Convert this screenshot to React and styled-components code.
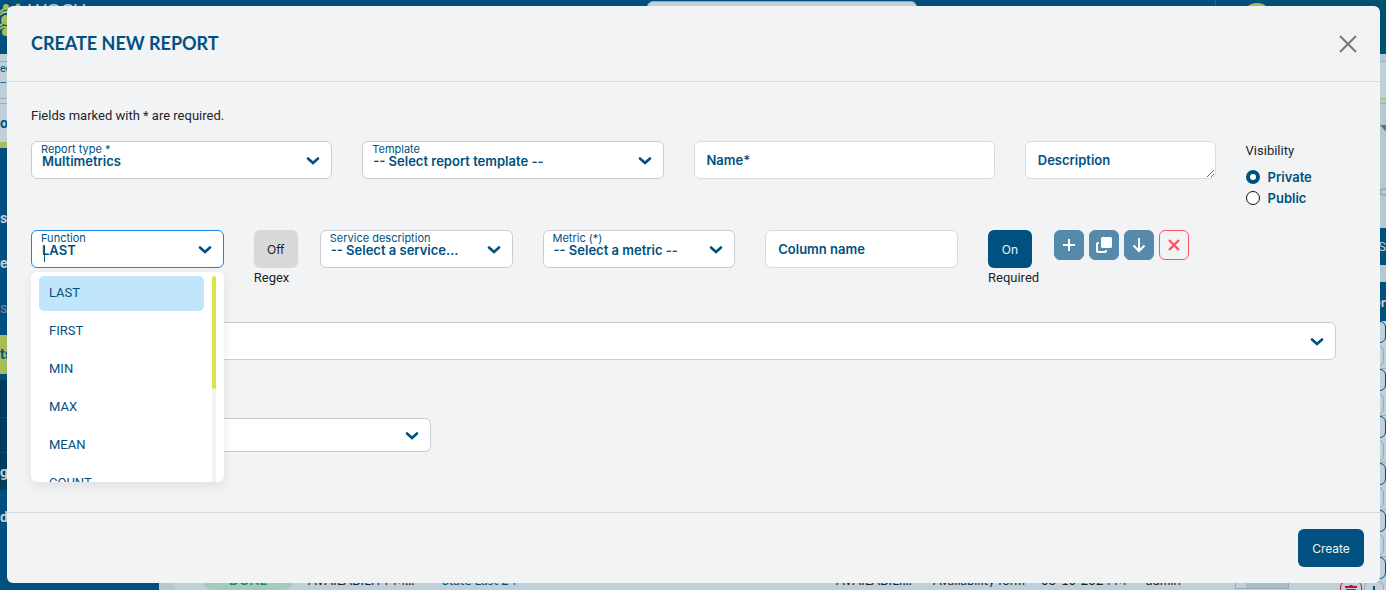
import React, { useState } from 'react';
import styled, { createGlobalStyle, css } from 'styled-components';

const colors = {
  navy: '#00507f',
  navyDark: '#003d5c',
  blue: '#005180',
  lime: '#dde346',
  olive: '#a8bc58',
  panel: '#f2f3f5',
  border: '#cacccf',
  mist: '#bfd0da',
};

const fonts = {
  title: "Lato, 'Noto Sans', sans-serif",
  body: "Roboto, 'Noto Sans', sans-serif",
  control: "Inter, 'Noto Sans', sans-serif",
};

const GlobalStyle = createGlobalStyle`
  *, *::before, *::after { box-sizing: border-box; }
  body { margin: 0; overflow: hidden; background: ${colors.navy}; }
  button, input, select, textarea { font-family: inherit; margin: 0; }
`;

/* ---------- page behind the dialog ---------- */

const Page = styled.div`
  position: relative;
  height: 100vh;
  overflow: hidden;
  display: flex;
  flex-direction: column;
  font-family: ${fonts.body};
  font-size: 13px;
  color: #212529;
`;

const Topbar = styled.header`
  flex: none;
  display: flex;
  align-items: flex-start;
  height: 54px;
  background: linear-gradient(90deg, #00507f 85%, #005070);
`;

const Brand = styled.div`
  display: flex;
  align-items: flex-start;
  gap: 4px;
  width: 647px;
  color: #bfd0da;
  font-family: ${fonts.title};
  font-size: 18px;
  line-height: 20px;

  svg { flex: none; }
`;

const SearchBox = styled.div`
  width: 270px;
  height: 36px;
  margin-top: 1px;
  border: 1px solid #8fa9ba;
  border-radius: 6px;
  background: #c3d0dc;
`;

const UserArea = styled.div`
  flex: 1;
  display: flex;
  justify-content: flex-end;
  gap: 26px;
  padding-right: 114px;
`;

const Divider = styled.div`
  width: 1px;
  height: 54px;
  background: #33627a;
`;

const Avatar = styled.div`
  width: 30px;
  height: 30px;
  margin-top: 3px;
  border-radius: 50%;
  background: ${colors.olive};
`;

const PageBody = styled.div`
  flex: 1;
  display: flex;
  min-height: 0;
`;

const Side = styled.aside`
  flex: none;
  width: 159px;
  background: ${colors.navy};
`;

const SideFilter = styled.div`
  height: 88px;
  background: ${colors.mist};
  color: ${colors.blue};
  line-height: 14px;
  font-size: 11px;
  padding-top: 7px;
`;

const SideSelect = styled.div`
  height: 38px;
  border-top: 1px solid #9aacb8;
  border-bottom: 1px solid #9aacb8;
`;

const SideTab = styled.div`
  margin-top: 4px;
  height: 39px;
  border-top: 1px solid #9aacb8;
  font-size: 14px;
  font-weight: 700;
  line-height: 39px;
`;

const SideStripe = styled.div`
  height: 6px;
  background: ${colors.olive};
`;

const SideItem = styled.div`
  height: ${({ $height }) => $height}px;
  line-height: ${({ $height }) => $height}px;
  font-size: 14px;
  font-weight: 700;
  color: #c0ced8;
  white-space: nowrap;
  ${({ $tone }) => $tone === 'dim' && css`
    font-weight: 400;
    color: #80868f;
  `}
  ${({ $tone }) => $tone === 'active' && css`
    background: ${colors.olive};
    color: ${colors.blue};
  `}
  ${({ $tone }) => $tone === 'dark' && css`
    background: ${colors.navyDark};
    border-bottom: 1px solid #0a4a6e;
  `}
`;

const Content = styled.main`
  flex: 1;
  min-width: 0;
  background: #b5c7d1;
`;

const ContentFilter = styled.div`
  height: 38px;
  margin-top: 7px;
  border-top: 1px solid ${colors.olive};
  border-bottom: 1px solid ${colors.olive};
  background: ${colors.mist};
`;

const ContentTools = styled.div`
  display: flex;
  justify-content: flex-end;
  height: 125px;
  margin-top: 4px;
  padding-top: 21px;
  border-top: 1px solid #9aacb8;
`;

const Band = styled.div`
  height: 37px;
  margin-bottom: 17px;
  background: ${colors.navy};
  color: ${colors.mist};
  text-align: right;
  line-height: 37px;
`;

const ReportTable = styled.table`
  width: calc(100% - 15px);
  margin-left: 15px;
  border-collapse: collapse;
  table-layout: fixed;
  font-family: ${fonts.title};
  font-size: 13px;
  background: ${colors.mist};

  th {
    height: 39px;
    padding: 0;
    background: ${colors.navy};
    color: ${colors.mist};
    text-align: right;
    font-size: 14px;
  }

  td {
    height: 47px;
    padding: 0;
    border-bottom: 1px solid #9fb2bd;
    color: #15252f;
    white-space: nowrap;
  }
`;

const DoneBadge = styled.span`
  display: block;
  width: 90px;
  margin-left: 29px;
  border-radius: 10px;
  background: #a3cabb;
  color: #0b9444;
  text-align: center;
  font-weight: 700;
  line-height: 20px;
`;

const LinkCell = styled.span`
  color: ${colors.blue};
`;

const Gauge = styled.div`
  width: 54px;
  height: 18px;
  border: 1px solid #97abb8;
  background: linear-gradient(90deg, ${colors.mist} 20%, #a9bdc9 20%);
`;

const RowActions = styled.div`
  display: grid;
  gap: 2px;
  height: 46px;
`;

const ActionLine = styled.div`
  display: flex;
  justify-content: flex-end;
  gap: 2px;
  padding-right: ${({ $inset }) => ($inset ? 2 : 0)}px;
`;

const ActionBox = styled.span`
  display: flex;
  justify-content: center;
  width: ${({ $narrow }) => ($narrow ? 20 : 22)}px;
  height: 22px;
  padding-top: 2px;
  border: 1px solid ${({ $color }) => $color};
  border-radius: 6px;
  color: ${({ $color }) => $color};
`;

/* ---------- dialog ---------- */

const Dialog = styled.section`
  position: absolute;
  top: 6px;
  left: 7px;
  right: 6px;
  border-radius: 6px;
  background: ${colors.panel};
`;

const DialogHeader = styled.header`
  display: flex;
  align-items: center;
  justify-content: space-between;
  height: 76px;
  padding: 0 20px 0 24px;
  border-bottom: 1px solid #d6d8da;
`;

const DialogTitle = styled.h2`
  margin: 0 0 2px;
  color: ${colors.blue};
  font-family: ${fonts.title};
  font-size: 18px;
  line-height: 24px;
  font-weight: 700;
`;

const CloseButton = styled.button`
  display: flex;
  padding: 0;
  border: 0;
  background: none;
  color: #777;
  cursor: pointer;
`;

const DialogBody = styled.form`
  padding: 24px 24px 60px;
`;

const Note = styled.p`
  margin: 0 0 15px;
  line-height: 20px;
`;

const MainFields = styled.div`
  display: grid;
  grid-template-columns: repeat(12, minmax(0, 1fr));
  margin-bottom: 22px;
`;

const MetricFields = styled.div`
  display: grid;
  grid-template-columns: minmax(0, 1fr) 66px repeat(3, minmax(0, 1fr)) 66px 302px;
  margin-bottom: 34px;
`;

const Cell = styled.div`
  grid-column: span ${({ $span = 1 }) => $span};
  padding-right: ${({ $flush }) => ($flush ? 0 : 30)}px;
`;

const FieldBox = styled.div`
  position: relative;
  height: ${({ $short }) => ($short ? 34 : 38)}px;
  width: ${({ $width = '100%' }) => $width};
  margin-bottom: ${({ $spaced }) => ($spaced ? 58 : 0)}px;
`;

const FloatingLabel = styled.label`
  position: absolute;
  top: 2px;
  left: 10px;
  color: ${colors.blue};
  font-family: ${fonts.control};
  font-size: 11px;
  line-height: 13px;
  pointer-events: none;
`;

const Chevron = styled.svg`
  position: absolute;
  top: 50%;
  right: 12px;
  width: 14px;
  height: 8px;
  margin-top: -3px;
  pointer-events: none;
`;

const control = css`
  display: block;
  width: 100%;
  border: 1px solid ${colors.border};
  border-radius: 6px;
  background: #fff;
  color: ${colors.blue};
  font-family: ${fonts.control};
  font-size: 13px;
  font-weight: 600;
  line-height: 20px;
  outline: 0;

  &::placeholder {
    color: ${colors.blue};
    opacity: 1;
  }
`;

const Select = styled.select`
  ${control}
  height: 100%;
  padding: 1px 36px 0 10px;
  appearance: none;
  text-overflow: ellipsis;
`;

const ComboInput = styled.input`
  ${control}
  height: 100%;
  padding: 1px 36px 0 10px;
  border-color: #1587e8;
`;

const Caret = styled.span`
  position: absolute;
  top: 16px;
  left: 13px;
  width: 1px;
  height: 16px;
  background: ${colors.blue};
`;

const TextInput = styled.input`
  ${control}
  height: 38px;
  padding: 0 12px;
  border-color: #d8dadc;
`;

const TextArea = styled.textarea`
  ${control}
  height: 38px;
  padding: 8px 12px;
  border-color: #d8dadc;
  overflow: hidden;
  resize: both;
`;

const Menu = styled.div`
  position: absolute;
  z-index: 2;
  top: calc(100% + 4px);
  left: 0;
  right: 0;
  display: flex;
  gap: 8px;
  height: 210px;
  padding: 0 8px;
  overflow: hidden;
  border-radius: 6px;
  background: #fff;
  box-shadow: 0 4px 12px rgba(0, 0, 0, 0.08);
`;

const OptionList = styled.ul`
  flex: 1;
  display: flex;
  flex-direction: column;
  gap: 3px;
  margin: 0;
  padding: 4px 0 0;
  list-style: none;
`;

const Option = styled.li`
  flex: none;
  height: 35px;
  padding: 0 10px;
  border-radius: 5px;
  background: ${({ $active }) => ($active ? '#c1e5fb' : 'transparent')};
  color: ${colors.blue};
  line-height: 34px;
  cursor: pointer;
`;

const ScrollTrack = styled.div`
  width: 4px;
  margin-top: 4px;
  background: #f2f3f5;
`;

const ScrollThumb = styled.div`
  height: 113px;
  border-radius: 2px;
  background: ${colors.lime};
`;

const Visibility = styled.fieldset`
  margin: 0;
  padding: 0;
  border: 0;
  min-width: 0;

  legend {
    padding: 0;
    margin-bottom: 5px;
    line-height: 20px;
  }
`;

const RadioLabel = styled.label`
  display: flex;
  align-items: center;
  gap: 8px;
  height: 21px;
  color: ${colors.blue};
  font-family: ${fonts.control};
  font-weight: 600;
`;

const Radio = styled.input`
  appearance: none;
  flex: none;
  width: 14px;
  height: 14px;
  border: 1px solid #111;
  border-radius: 50%;
  background: #fff;

  &:checked {
    border: 4px solid ${colors.blue};
  }
`;

const Toggle = styled.button`
  display: block;
  width: 44px;
  height: 38px;
  padding: 0;
  border: 0;
  border-radius: 6px;
  background: ${({ $on }) => ($on ? colors.blue : '#d8d8d8')};
  color: ${({ $on }) => ($on ? '#f2f3f5' : '#212121')};
  font-family: ${fonts.control};
  font-size: 12px;
  cursor: pointer;
`;

const ToggleLabel = styled.label`
  display: block;
  line-height: 20px;
`;

const Tools = styled.div`
  display: flex;
  gap: 5px;
`;

const ToolButton = styled.button`
  display: flex;
  align-items: center;
  justify-content: center;
  width: 30px;
  height: 30px;
  padding: 0;
  border: 1px solid ${({ $danger }) => ($danger ? '#ff5468' : '#558aab')};
  border-radius: 6px;
  background: ${({ $danger }) => ($danger ? 'transparent' : '#558aab')};
  color: ${({ $danger }) => ($danger ? '#ff5468' : '#fff')};
  cursor: pointer;
`;

const DialogFooter = styled.footer`
  display: flex;
  justify-content: flex-end;
  padding: 16px;
  border-top: 1px solid #d6d8da;
`;

const CreateButton = styled.button`
  width: 66px;
  height: 38px;
  padding: 0;
  border: 0;
  border-radius: 6px;
  background: ${colors.blue};
  color: #f2f3f5;
  font-family: ${fonts.control};
  font-size: 12px;
  cursor: pointer;
`;

const ChevronIcon = () => (
  <Chevron viewBox="0 0 14 8" fill="none" stroke={colors.blue} strokeWidth="2.6" strokeLinecap="round">
    <path d="M2 1.5 7 6l5-4.5" />
  </Chevron>
);

const SelectField = ({ id, label, value, short, spaced, width }) => (
  <FieldBox $short={short} $spaced={spaced} $width={width}>
    <Select id={id} aria-label={label ? undefined : id}>
      <option>{value}</option>
    </Select>
    {label && <FloatingLabel htmlFor={id}>{label}</FloatingLabel>}
    <ChevronIcon />
  </FieldBox>
);

const functions = ['LAST', 'FIRST', 'MIN', 'MAX', 'MEAN', 'COUNT'];

const FunctionField = () => {
  const [selected, setSelected] = useState('LAST');

  return (
    <FieldBox>
      <ComboInput
        id="function"
        role="combobox"
        aria-expanded="true"
        aria-controls="function-options"
        value={selected}
        readOnly
      />
      <FloatingLabel htmlFor="function">Function</FloatingLabel>
      <Caret />
      <ChevronIcon />
      <Menu>
        <OptionList id="function-options" role="listbox">
          {functions.map((name) => (
            <Option
              key={name}
              role="option"
              aria-selected={name === selected}
              $active={name === selected}
              onClick={() => setSelected(name)}
            >
              {name}
            </Option>
          ))}
        </OptionList>
        <ScrollTrack>
          <ScrollThumb />
        </ScrollTrack>
      </Menu>
    </FieldBox>
  );
};

const ToggleField = ({ id, label, initial }) => {
  const [on, setOn] = useState(initial);

  return (
    <>
      <Toggle id={id} type="button" aria-pressed={on} $on={on} onClick={() => setOn(!on)}>
        {on ? 'On' : 'Off'}
      </Toggle>
      <ToggleLabel htmlFor={id}>{label}</ToggleLabel>
    </>
  );
};

const CreateReportDialog = () => {
  const [visibility, setVisibility] = useState('Private');

  return (
    <Dialog role="dialog" aria-labelledby="dialog-title">
      <DialogHeader>
        <DialogTitle id="dialog-title">CREATE NEW REPORT</DialogTitle>
        <CloseButton type="button" aria-label="Close">
          <svg width="24" height="24" viewBox="0 0 24 24" stroke="currentColor" strokeWidth="2">
            <path d="m4 4 16 16M20 4 4 20" />
          </svg>
        </CloseButton>
      </DialogHeader>

      <DialogBody id="report-form" onSubmit={(e) => e.preventDefault()}>
        <Note>Fields marked with * are required.</Note>

        <MainFields>
          <Cell $span={3}>
            <SelectField id="report-type" label="Report type *" value="Multimetrics" />
          </Cell>
          <Cell $span={3}>
            <SelectField id="template" label="Template" value="-- Select report template --" />
          </Cell>
          <Cell $span={3}>
            <TextInput placeholder="Name*" aria-label="Name" />
          </Cell>
          <Cell $span={2}>
            <TextArea placeholder="Description" aria-label="Description" rows={1} />
          </Cell>
          <Cell $flush>
            <Visibility>
              <legend>Visibility</legend>
              {['Private', 'Public'].map((name) => (
                <RadioLabel key={name}>
                  <Radio
                    type="radio"
                    name="visibility"
                    checked={visibility === name}
                    onChange={() => setVisibility(name)}
                  />
                  {name}
                </RadioLabel>
              ))}
            </Visibility>
          </Cell>
        </MainFields>

        <MetricFields>
          <Cell>
            <FunctionField />
          </Cell>
          <Cell $flush>
            <ToggleField id="regex" label="Regex" initial={false} />
          </Cell>
          <Cell>
            <SelectField id="service" label="Service description" value="-- Select a service..." />
          </Cell>
          <Cell>
            <SelectField id="metric" label="Metric (*)" value="-- Select a metric --" />
          </Cell>
          <Cell>
            <TextInput placeholder="Column name" aria-label="Column name" />
          </Cell>
          <Cell $flush>
            <ToggleField id="required" label="Required" initial />
          </Cell>
          <Cell $flush>
            <Tools>
              <ToolButton type="button" aria-label="Add">
                <svg width="16" height="16" viewBox="0 0 16 16" stroke="currentColor" strokeWidth="2">
                  <path d="M8 2v12M2 8h12" />
                </svg>
              </ToolButton>
              <ToolButton type="button" aria-label="Duplicate">
                <svg width="18" height="18" viewBox="0 0 18 18" fill="none">
                  <rect x="6" y="1" width="11" height="11" rx="1.5" fill="currentColor" />
                  <path d="M4 7H3a1 1 0 0 0-1 1v7a1 1 0 0 0 1 1h7a1 1 0 0 0 1-1v-1" stroke="currentColor" strokeWidth="2" />
                </svg>
              </ToolButton>
              <ToolButton type="button" aria-label="Move down">
                <svg width="16" height="16" viewBox="0 0 16 16" fill="none" stroke="currentColor" strokeWidth="2">
                  <path d="M8 1v13M2.5 8.5 8 14l5.5-5.5" />
                </svg>
              </ToolButton>
              <ToolButton type="button" aria-label="Remove" $danger>
                <svg width="12" height="12" viewBox="0 0 12 12" stroke="currentColor" strokeWidth="2.4">
                  <path d="m1 1 10 10M11 1 1 11" />
                </svg>
              </ToolButton>
            </Tools>
          </Cell>
        </MetricFields>

        <SelectField id="hosts" value="" spaced width="calc(100% - 20px)" />
        <SelectField id="period" value="" short width="400px" />
      </DialogBody>

      <DialogFooter>
        <CreateButton type="submit" form="report-form">Create</CreateButton>
      </DialogFooter>
    </Dialog>
  );
};

const ReportActions = () => (
  <RowActions>
    <ActionLine>
      <ActionBox $color={colors.blue} />
      <ActionBox $color={colors.blue} />
    </ActionLine>
    <ActionLine $inset>
      <ActionBox $color="#c8102e">
        <svg width="14" height="14" viewBox="0 0 14 14" fill="currentColor">
          <path d="M1 2h4l1-1h2l1 1h4v2H1zM2 5h10l-1 8H3z" />
        </svg>
      </ActionBox>
      <ActionBox $color="#94abb8" $narrow>
        <svg width="14" height="14" viewBox="0 0 14 14" stroke={colors.blue} strokeWidth="2">
          <path d="M7 2v9" />
        </svg>
      </ActionBox>
    </ActionLine>
  </RowActions>
);

const columns = [134, 134, 394, 97, 108, 105, 89, 91];

const ReportsPage = () => (
  <>
    <Topbar>
      <Brand>
        <svg width="24" height="40" viewBox="0 0 24 40" fill={colors.olive}>
          <circle cx="6" cy="7" r="3" />
          <circle cx="18" cy="6" r="2.5" />
          <circle cx="6" cy="20" r="5" />
          <circle cx="6" cy="32" r="4" />
          <path d="M0 12 6 7M0 26l6-6" stroke={colors.olive} strokeWidth="2" />
          <path d="M0 15q4-5 10-2M0 29q4-4 8-1" fill="none" stroke={colors.olive} strokeWidth="2" />
        </svg>
        WOCU
      </Brand>
      <SearchBox />
      <UserArea>
        <Divider />
        <Avatar />
      </UserArea>
    </Topbar>
    <PageBody>
      <Side>
        <SideFilter>
          <SideSelect>ec<br />--</SideSelect>
          <SideTab>o</SideTab>
        </SideFilter>
        <SideStripe />
        <SideItem $height={48} />
        <SideItem $height={45}>s</SideItem>
        <SideItem $height={45}>er</SideItem>
        <SideItem $height={44} $tone="dim">s</SideItem>
        <SideItem $height={5} />
        <SideItem $height={39} $tone="active">ts</SideItem>
        <SideItem $height={6} />
        <SideItem $height={38} $tone="dark" />
        <SideItem $height={35} $tone="dark" />
        <SideItem $height={38} $tone="dark">g</SideItem>
        <SideItem $height={52}>de</SideItem>
      </Side>
      <Content>
        <ContentFilter />
        <ContentTools>
          <svg width="12" height="90" viewBox="0 0 12 90">
            <path d="M6 0h12v8h-5z" fill="#5f747f" />
            <path d="M12 64H9a3 3 0 0 0 0 6h3" fill="none" stroke="#7d909b" />
          </svg>
        </ContentTools>
        <Band>S</Band>
        <ReportTable>
          <colgroup>
            {columns.map((width, i) => <col key={i} width={width} />)}
            <col />
          </colgroup>
          <thead>
            <tr><th colSpan={9}>or</th></tr>
          </thead>
          <tbody>
            {[1, 2, 3, 4, 5].map((n) => (
              <tr key={n}>
                <td colSpan={9}><ReportActions /></td>
              </tr>
            ))}
            <tr>
              <td><DoneBadge>DONE</DoneBadge></td>
              <td>AVAILABILITY M...</td>
              <td><LinkCell>State Last 24</LinkCell></td>
              <td>AVAILABILI...</td>
              <td>Availability form</td>
              <td>08-10-2024 M</td>
              <td>admin</td>
              <td><Gauge /></td>
              <td><ReportActions /></td>
            </tr>
          </tbody>
        </ReportTable>
      </Content>
    </PageBody>
  </>
);

const App = () => (
  <Page>
    <GlobalStyle />
    <ReportsPage />
    <CreateReportDialog />
  </Page>
);

export default App;
